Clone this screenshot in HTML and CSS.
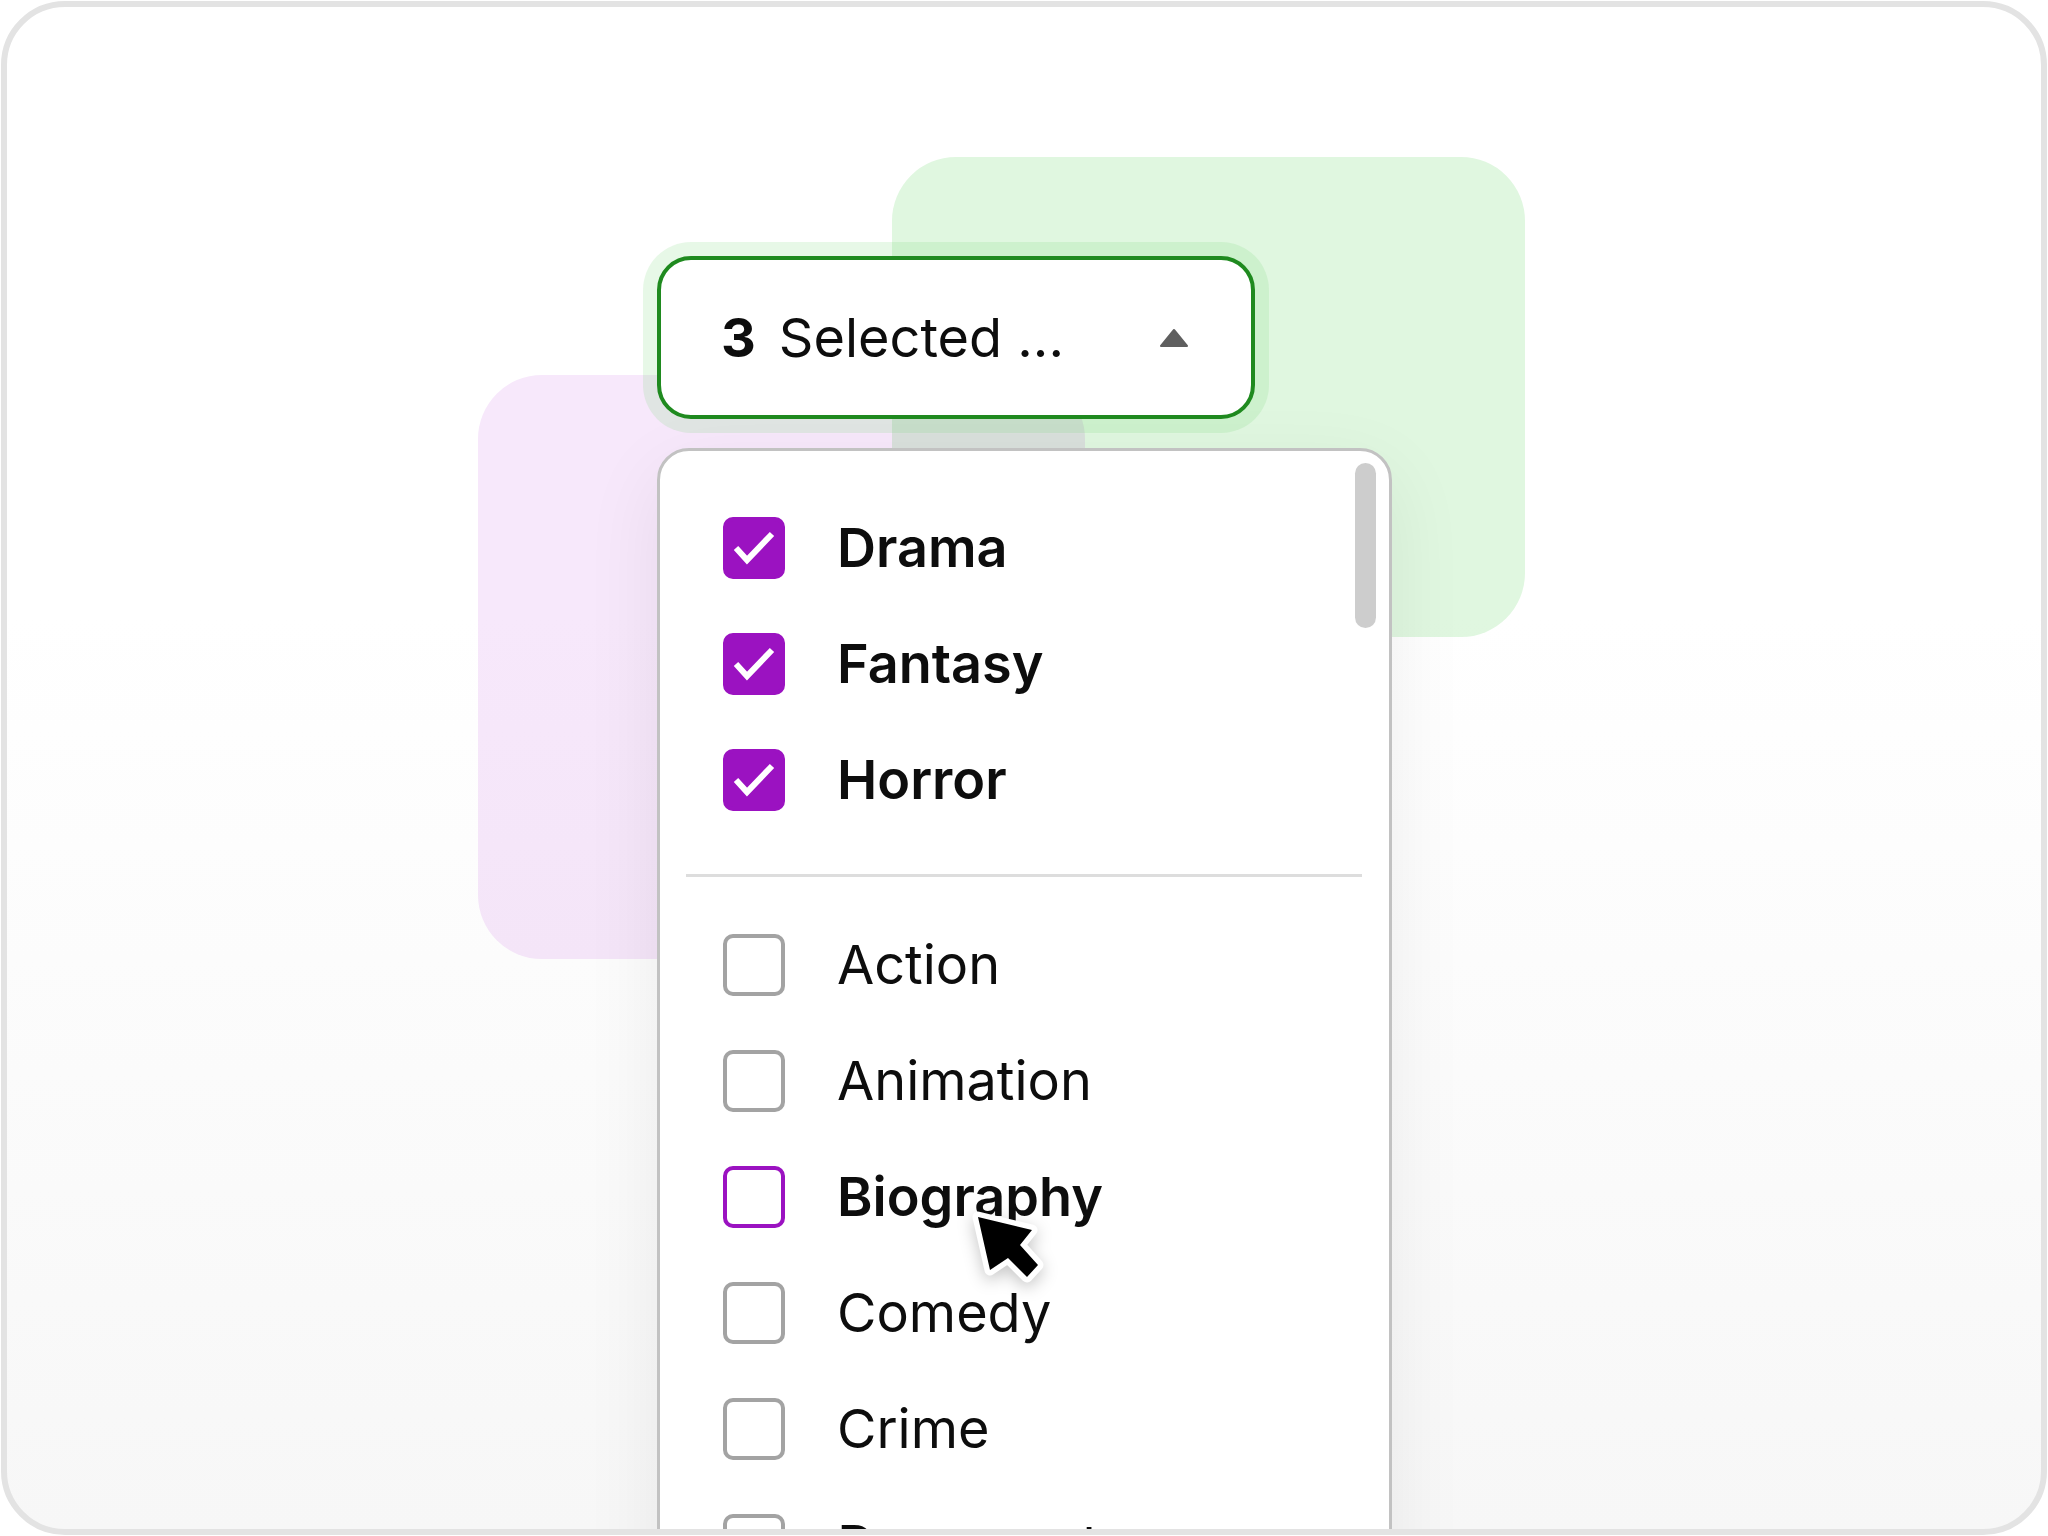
FILE: index.html
```html
<!DOCTYPE html>
<html lang="en">
<head>
<meta charset="utf-8">
<title>Genre multi-select</title>
<link rel="stylesheet" href="styles.css">
</head>
<body>
<div class="frame">
  <div class="blob blob-green"></div>
  <div class="blob blob-purple"></div>

  <div class="select">
    <div class="trigger">
      <span class="count">3</span>
      <span class="label">Selected ...</span>
      <svg class="caret" viewBox="0 0 30 20" width="30" height="20"><path d="M15 2 L28 18 L2 18 Z" fill="#5f5f5f" stroke="#5f5f5f" stroke-width="2" stroke-linejoin="round"/></svg>
    </div>

    <div class="panel">
      <div class="scrollbar"></div>
      <ul class="group">
        <li class="option checked"><span class="box"><svg viewBox="0 0 62 62" width="62" height="62"><path d="M13 31 L24 43 L49 17" fill="none" stroke="#fff" stroke-width="6"/></svg></span><span class="text">Drama</span></li>
        <li class="option checked"><span class="box"><svg viewBox="0 0 62 62" width="62" height="62"><path d="M13 31 L24 43 L49 17" fill="none" stroke="#fff" stroke-width="6"/></svg></span><span class="text">Fantasy</span></li>
        <li class="option checked"><span class="box"><svg viewBox="0 0 62 62" width="62" height="62"><path d="M13 31 L24 43 L49 17" fill="none" stroke="#fff" stroke-width="6"/></svg></span><span class="text">Horror</span></li>
      </ul>
      <div class="divider"></div>
      <ul class="group">
        <li class="option"><span class="box"></span><span class="text">Action</span></li>
        <li class="option"><span class="box"></span><span class="text">Animation</span></li>
        <li class="option hover"><span class="box"></span><span class="text">Biography</span></li>
        <li class="option"><span class="box"></span><span class="text">Comedy</span></li>
        <li class="option"><span class="box"></span><span class="text">Crime</span></li>
        <li class="option"><span class="box"></span><span class="text">Documentary</span></li>
        <li class="option"><span class="box"></span><span class="text">Family</span></li>
      </ul>
    </div>
  </div>

  <svg class="cursor" viewBox="0 0 100 100" width="100" height="100">
    <path d="M18 17 L72 30 L60 45 L78 65 L67 77 L48 58 L30 70 Z" fill="#000" stroke="#fff" stroke-width="11" stroke-linejoin="round" paint-order="stroke"/>
  </svg>
</div>
</body>
</html>
```

FILE: styles.css
```css
html, body {
  margin: 0;
  padding: 0;
  background: #ffffff;
}

body {
  font-family: Inter, "Noto Sans", "Liberation Sans", sans-serif;
  color: #0d0d0d;
}

.frame {
  position: relative;
  box-sizing: border-box;
  width: 2046px;
  height: 1534px;
  margin: 1px;
  border: 6px solid #e3e3e3;
  border-radius: 64px;
  overflow: hidden;
  background: linear-gradient(180deg, #ffffff 0%, #ffffff 40%, #f7f7f7 100%);
}

.blob {
  position: absolute;
  border-radius: 64px;
  mix-blend-mode: multiply;
}

.blob-green {
  left: 885px;
  top: 150px;
  width: 633px;
  height: 480px;
  background: #e0f7e0;
}

.blob-purple {
  left: 471px;
  top: 368px;
  width: 607px;
  height: 584px;
  background: #f7e8fb;
}

.select {
  position: relative;
  display: flex;
  flex-direction: column;
  align-items: flex-start;
  margin-left: 650px;
  padding-top: 249px;
}

.trigger {
  box-sizing: border-box;
  width: 598px;
  height: 163px;
  display: flex;
  align-items: center;
  padding: 0 62px 0 60px;
  border: 4px solid #1f8a1f;
  border-radius: 34px;
  background: #ffffff;
  box-shadow: 0 0 0 14px rgba(110, 215, 110, 0.17);
  font-size: 54px;
  line-height: 1;
}

.count {
  font-weight: 700;
  margin-right: 23px;
}

.label {
  font-weight: 400;
}

.caret {
  margin-left: auto;
  display: block;
}

.panel {
  position: relative;
  box-sizing: border-box;
  width: 735px;
  height: 1200px;
  margin-top: 29px;
  padding: 39px 0 0 0;
  border: 3px solid #c2c2c2;
  border-radius: 32px;
  background: #ffffff;
  box-shadow: 0 24px 80px rgba(0, 0, 0, 0.07);
}

.scrollbar {
  position: absolute;
  right: 13px;
  top: 12px;
  width: 21px;
  height: 165px;
  border-radius: 11px;
  background: #cdcdcd;
}

.group {
  list-style: none;
  margin: 0;
  padding: 0 0 0 63px;
}

.option {
  display: flex;
  align-items: center;
  gap: 52px;
  height: 116px;
  font-size: 54px;
  line-height: 1;
  font-weight: 400;
}

.option.checked .text,
.option.hover .text {
  font-weight: 600;
}

.box {
  box-sizing: border-box;
  flex: 0 0 62px;
  width: 62px;
  height: 62px;
  border: 4px solid #a3a3a3;
  border-radius: 10px;
  background: #ffffff;
  position: relative;
}

.option.checked .box {
  background: #9b12c1;
  border-color: #9b12c1;
}

.option.checked .box svg {
  position: absolute;
  left: -4px;
  top: -4px;
}

.option.hover .box {
  border-color: #9b12c1;
}

.divider {
  height: 3px;
  margin: 36px 27px 30px 26px;
  background: #dddddd;
}

.cursor {
  position: absolute;
  left: 953px;
  top: 1193px;
  filter: drop-shadow(0 5px 8px rgba(0, 0, 0, 0.22));
}
```
